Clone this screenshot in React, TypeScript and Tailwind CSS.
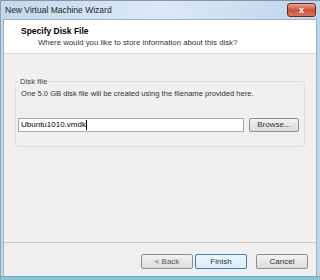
import React from "react";

export default function App() {
  const font = { fontFamily: '"Liberation Sans", Arial, sans-serif' };
  return (
    <div className="w-[320px] h-[280px] overflow-hidden bg-white" style={font}>
      <div className="w-[320px] h-[280px] flex flex-col bg-gradient-to-r from-[#c5d9ec] via-[#dce9f5] to-[#bfd5ea] border-l border-[#8aa2b8] border-t border-t-[#7f98ad]">
        {/* title bar */}
        <div className="h-[18px] flex items-center pl-[4px] pr-[4px] relative shrink-0">
          <span className="text-[8.5px] text-[#1e1e1e] mt-[1px]">New Virtual Machine Wizard</span>
          <div className="absolute right-[4px] top-[2px] w-[29px] h-[14px] rounded-[3px] border border-[#6f2a22] bg-gradient-to-b from-[#e6a593] via-[#c9523d] to-[#d97759] flex items-center justify-center">
            <span className="text-white text-[9px] font-bold leading-none">x</span>
          </div>
        </div>
        {/* client area */}
        <div className="flex-1 ml-[2px] mr-[3px] flex flex-col border border-[#9bb3c8] border-b-0">
          <div className="bg-white h-[34px] shrink-0 border-b border-[#d8d8d8] pl-[17px] pt-[6px]">
            <div className="text-[8.5px] font-bold text-black leading-[11px]">Specify Disk File</div>
            <div className="text-[7.8px] text-[#333] leading-[11px] pl-[17px]">Where would you like to store information about this disk?</div>
          </div>
          <div className="flex-1 bg-[#f0f0f0] flex flex-col">
            <div className="flex-1 px-[11px] pt-[27px]">
              <div className="relative border border-[#e0e0e0] rounded-[2px] h-[66px] px-[5px] pt-[6px]">
                <span className="absolute -top-[6px] left-[3px] bg-[#f0f0f0] px-[1px] text-[7.8px] text-[#444] leading-[11px]">Disk file</span>
                <div className="text-[7.6px] text-[#333] leading-[11px]">One 5.0 GB disk file will be created using the filename provided here.</div>
                <div className="flex items-center mt-[19px] -ml-[3px] gap-[5px]">
                  <div className="w-[230px] h-[14px] bg-white border border-[#a9a9a9] flex items-center pl-[2px] text-[8px] text-black">
                    Ubuntu1010.vmdk<span className="w-px h-[10px] bg-black"></span>
                  </div>
                  <div className="w-[51px] h-[14px] border border-[#8e8f8f] rounded-[2px] bg-gradient-to-b from-[#f2f2f2] to-[#dcdcdc] flex items-center justify-center text-[8px] text-[#333]">Browse...</div>
                </div>
              </div>
            </div>
            <div className="h-[34px] shrink-0 border-t border-[#c8c8c8] flex items-start justify-end pr-[8px] pt-[11px] gap-[2px]">
              <div className="w-[52px] h-[15px] border border-[#8e8f8f] rounded-[2px] bg-gradient-to-b from-[#f2f2f2] to-[#dcdcdc] flex items-center justify-center text-[8px] text-[#555]">&lt; Back</div>
              <div className="w-[52px] h-[15px] border border-[#3c7fb1] rounded-[2px] bg-gradient-to-b from-[#eaf6fd] to-[#d9eefa] flex items-center justify-center text-[8px] text-[#333]">Finish</div>
              <div className="w-[52px] h-[15px] ml-[7px] border border-[#8e8f8f] rounded-[2px] bg-gradient-to-b from-[#f2f2f2] to-[#dcdcdc] flex items-center justify-center text-[8px] text-[#333]">Cancel</div>
            </div>
          </div>
        </div>
        <div className="h-[4px] shrink-0 bg-[#8fc3d6] border-t border-[#6aa9c2]"></div>
      </div>
    </div>
  );
}
